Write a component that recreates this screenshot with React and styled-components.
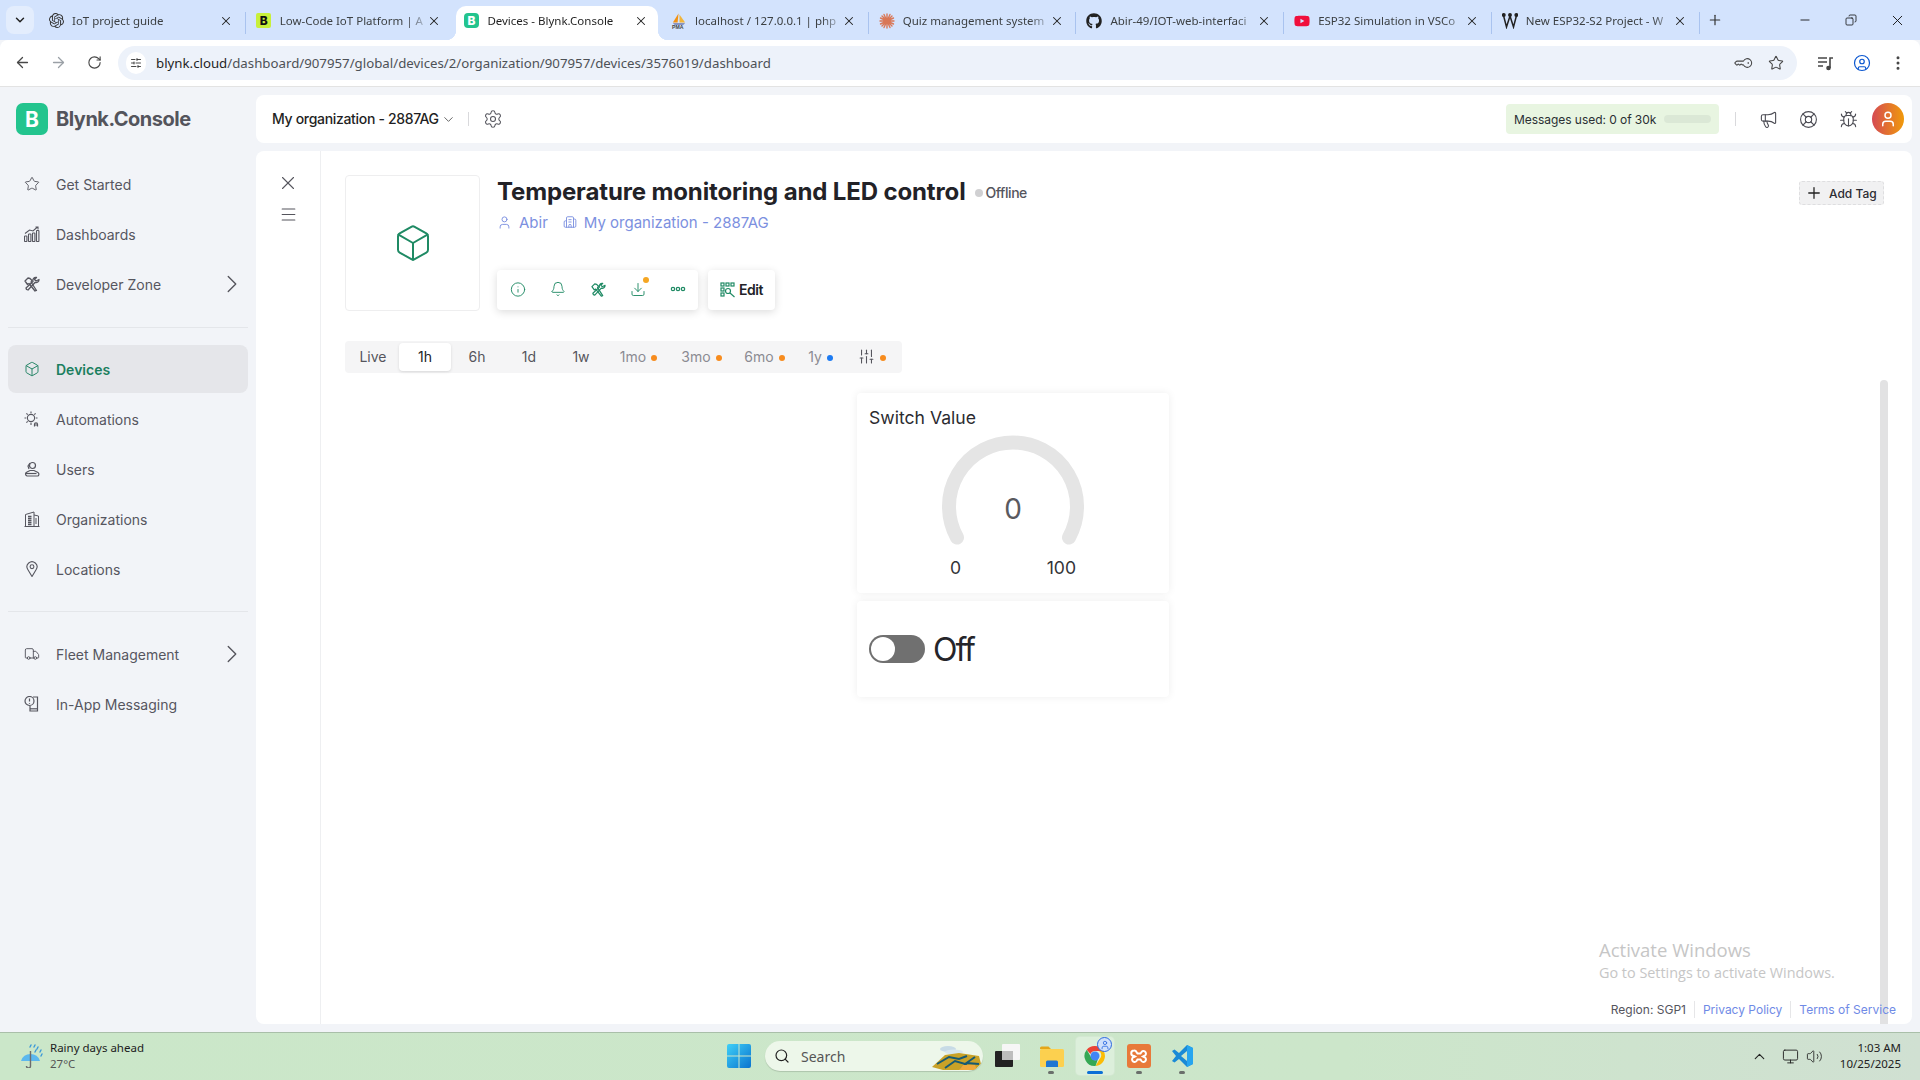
import React from 'react';
import styled, { createGlobalStyle } from 'styled-components';
import {
  X, Menu, Star, Box, ChevronRight, ChevronDown, Settings, Megaphone, LifeBuoy, Bug, Plus, Info, Bell,
  Download, User, Building2, SlidersVertical, ArrowLeft, ArrowRight, RotateCw, KeyRound,
  EllipsisVertical, CircleUser, Search, Minus, Copy, ChevronUp, Volume2, Monitor, Truck,
  SlidersHorizontal,
} from 'lucide-react';
import { FaGithub, FaYoutube } from 'react-icons/fa';
import { SiOpenai } from 'react-icons/si';

const UI = '"Inter", "Liberation Sans", sans-serif';
const SYS = '"Noto Sans", "Open Sans", sans-serif';

const Global = createGlobalStyle`
  html, body { margin: 0; padding: 0; height: 100%; overflow: hidden; background: #f2f4f8; }
  * { box-sizing: border-box; }
  #root { height: 1080px; }
`;

const Screen = styled.div`
  width: 1920px; height: 1080px; display: flex; flex-direction: column; font-family: ${UI}; overflow: hidden;
`;

/* Browser chrome */
const TabStrip = styled.div`
  height: 40px; flex: none; background: #d3e3fd; display: flex; align-items: flex-end; position: relative;
`;
const TabMenu = styled.div`
  width: 28px; height: 28px; margin: 0 4px 6px 6px; border-radius: 8px; background: #e3edfd;
  display: flex; align-items: center; justify-content: center; color: #222; flex: none;
`;
const Tab = styled.div`
  width: ${p => (p.$active ? '201.7px' : '207.7px')}; height: 34px; flex: none; display: flex; align-items: center; position: relative;
  margin: ${p => (p.$active ? '0 3px' : '0')};
  padding-left: ${p => (p.$active ? '7px' : '10px')}; padding-bottom: 5px; font: 11.5px ${SYS}; color: #3c4043;
  background: ${p => (p.$active ? '#fff' : 'transparent')};
  border-radius: 10px 10px 0 0;
  ${p => p.$active && `color: #1f1f1f;
    &::before, &::after { content: ''; position: absolute; bottom: 0; width: 10px; height: 10px; background: radial-gradient(circle at 0 0, transparent 10px, #fff 10.5px); }
    &::before { left: -10px; }
    &::after { right: -10px; transform: scaleX(-1); }`}
  ${p => p.$sep && `&::after { content: ''; position: absolute; right: 0; top: 6px; height: 22px; width: 1px; background: #a9c3ef; }`}
`;
const FavSlot = styled.span`
  width: 16px; height: 16px; flex: none; display: flex; align-items: center; justify-content: center; margin-right: 8px;
`;
const TabTitle = styled.span`
  width: 144px; white-space: nowrap; overflow: hidden; flex: none;
  mask-image: linear-gradient(to right, #000 88%, rgba(0,0,0,.25) 100%);
`;
const TabClose = styled.span`
  width: 20px; text-align: center; color: #222; display: flex; justify-content: center; flex: none;
`;
const NewTab = styled.span`
  margin-left: 7px; margin-bottom: 6px; color: #333; display: flex; height: 28px; align-items: center;
`;
const WindowControls = styled.div`
  margin-left: auto; display: flex; height: 40px; align-items: center; color: #111;
`;
const WinBtn = styled.span`
  width: 46px; display: flex; justify-content: center;
`;
const Toolbar = styled.div`
  height: 47px; flex: none; background: #fff; border-radius: 8px 8px 0 0; border-bottom: 1px solid #e3e3e3;
  display: flex; align-items: center; padding-left: 12px; padding-bottom: 1px;
`;
const NavBtn = styled.span`
  width: 20px; margin-right: 16px; display: flex; justify-content: center; color: ${p => (p.$off ? '#9aa0a6' : '#474747')};
`;
const UrlBar = styled.div`
  width: 1679px; height: 34px; margin-left: -2px; border-radius: 17px; background: #edf2fa; display: flex; align-items: center; padding-left: 8px;
`;
const SiteChip = styled.span`
  width: 20px; height: 22px; border-radius: 11px; background: #fff; display: flex; align-items: center; justify-content: center; color: #333; flex: none;
`;
const UrlText = styled.span`
  margin-left: 10px; font: 13.25px ${SYS}; color: #4d5156; white-space: nowrap;
  b { font-weight: 400; color: #1f1f1f; }
`;
const UrlIcons = styled.span`
  margin-left: auto; display: flex; gap: 16px; padding-right: 13px; color: #474747;
`;
const ToolIcons = styled.div`
  display: flex; align-items: center; margin-left: 20px; gap: 18px; color: #474747;
`;

/* Page */
const PageArea = styled.div`
  flex: 1; display: flex; min-height: 0; background: #f2f4f8;
`;
const Sidebar = styled.aside`
  width: 256px; flex: none; padding: 16px 8px 0;
`;
const Logo = styled.div`
  display: flex; align-items: center; gap: 8px; padding-left: 8px; margin-bottom: 25px; height: 32px;
`;
const LogoMark = styled.span`
  width: 32px; height: 32px; border-radius: 7px; background: #23c48e; color: #fff; font: 700 21px ${UI};
  display: flex; align-items: center; justify-content: center;
`;
const LogoText = styled.span`
  font: 700 20px ${UI}; color: #54545c; letter-spacing: -0.5px;
`;
const NavList = styled.div`
  display: flex; flex-direction: column; gap: 2px;
`;
const NavItem = styled.div`
  height: 48px; display: flex; align-items: center; padding: 0 1px 0 16px; gap: 16px; border-radius: 8px;
  font: ${p => (p.$active ? 600 : 400)} 14px ${UI};
  color: ${p => (p.$active ? '#1b7f5f' : '#56565f')};
  background: ${p => (p.$active ? '#e5e6ea' : 'transparent')};
  svg.lead { flex: none; }
  svg.more { margin-left: auto; color: #55555d; }
`;
const NavDivider = styled.div`
  height: 1px; background: #e4e6ea; margin: ${p => p.$m};
`;
const Content = styled.div`
  flex: 1; min-width: 0; display: flex; flex-direction: column; gap: 8px; padding: 8px 8px 8px 0;
`;
const TopBar = styled.header`
  height: 48px; flex: none; background: #fff; border-radius: 8px; display: flex; align-items: center; padding: 0 8px 0 16px; color: #1f1f24;
`;
const OrgName = styled.span`
  font: 500 14px ${UI}; color: #1f1f24; letter-spacing: -0.32px; padding-bottom: 1px;
`;
const OrgChevron = styled.span`
  display: flex; margin-left: 2px; color: #444;
`;
const VSep = styled.span`
  width: 1px; height: 14px; background: #d9d9dc; margin: ${p => p.$m};
`;
const GearIcon = styled.span`
  display: flex; color: #55555d;
`;
const Usage = styled.div`
  margin-left: auto; width: 213px; height: 30px; border-radius: 4px; background: #e8f5e1; display: flex; align-items: center; padding: 0 8px; gap: 8px;
  font: 400 12px ${UI}; color: #2a2f33; white-space: nowrap; letter-spacing: -0.05px;
`;
const UsageBar = styled.span`
  flex: 1; height: 8px; border-radius: 4px; background: #dbe8d6;
`;
const TopIcon = styled.span`
  width: 40px; display: flex; justify-content: center; color: #4c4c54;
`;
const Avatar = styled.span`
  width: 32px; height: 32px; border-radius: 50%; background: linear-gradient(90deg, #d54a53, #f09a0a); display: flex; align-items: center; justify-content: center; color: #fff; margin-left: 4px;
`;
const MainCard = styled.main`
  flex: 1; min-height: 0; background: #fff; border-radius: 8px; display: flex; position: relative; overflow: hidden;
`;
const Rail = styled.div`
  width: 65px; flex: none; border-right: 1px solid #eeeff1; padding-top: 21px; display: flex; flex-direction: column; align-items: center; gap: 8px; color: #55555d;
`;
const RailMenu = styled.span`
  display: flex; margin: 3px 0 1px;
`;
const Body = styled.div`
  flex: 1; min-width: 0; padding: 24px 16px 5px 24px; display: flex; flex-direction: column;
`;
const DeviceHead = styled.div`
  display: flex; gap: 17px;
`;
const DeviceImage = styled.div`
  width: 135px; height: 136px; flex: none; border: 1px solid #eeeeef; border-radius: 4px; display: flex; align-items: center; justify-content: center; color: #1f8a64;
`;
const DeviceInfo = styled.div`
  flex: 1; min-width: 0; display: flex; flex-direction: column;
`;
const TitleRow = styled.div`
  display: flex; align-items: center; height: 32px;
`;
const Title = styled.h1`
  margin: 0; font: 700 24px ${UI}; color: #222227; letter-spacing: -0.13px; white-space: nowrap;
`;
const StatusDot = styled.span`
  width: 8px; height: 8px; border-radius: 50%; background: #d0d0d2; margin: 3px 3px 0 9px;
`;
const StatusText = styled.span`
  font: 500 14px ${UI}; color: #55555d; letter-spacing: -0.45px; margin-top: 3px;
`;
const MetaRow = styled.div`
  display: flex; align-items: center; height: 20px; margin-top: 5px; color: #7c90e0; font: 400 15px ${UI}; white-space: nowrap;
`;
const MetaLink = styled.span`
  display: flex; align-items: center; gap: 7px; margin-right: 15px;
`;
const ActionRow = styled.div`
  display: flex; gap: 10px; margin-top: 38px;
`;
const ActionCard = styled.div`
  height: 40px; background: #fff; border-radius: 4px; box-shadow: 0 2px 8px rgba(0,0,0,.14); display: flex; align-items: center; color: #1f8a64;
  padding: ${p => p.$pad};
  gap: ${p => p.$gap};
`;
const ActionIcon = styled.span`
  width: 16px; display: flex; justify-content: center; position: relative; margin-top: -2px;
  ${p => p.$badge && `&::after { content: ''; position: absolute; right: -3px; top: -4px; width: 6px; height: 6px; border-radius: 50%; background: #f5a623; }`}
`;
const EditLabel = styled.span`
  font: 600 14px ${UI}; color: #222227; letter-spacing: -0.45px; margin-top: -1px;
`;
const AddTag = styled.button`
  align-self: flex-start; margin: 6px 12px 0 0; width: 85px; height: 24px; padding: 0 0 0 5px; background: #f1f1f2; border: 1px dashed #dedee0; border-radius: 3px;
  display: flex; align-items: center; gap: 6px; font: 500 12px ${UI}; color: #2c2c33; white-space: nowrap;
`;
const RangeTabs = styled.div`
  width: 557px; height: 32px; margin-top: 30px; padding: 2px; border-radius: 4px; background: #f5f5f6; display: flex; align-items: stretch;
`;
const RangeTab = styled.span`
  display: flex; align-items: center; justify-content: center; gap: 5px; flex: none; padding-bottom: 1px;
  width: ${p => p.$w}px; font: 400 14px ${UI};
  color: ${p => (p.$muted ? '#8b8b92' : '#55555d')};
  ${p => p.$active && `background: #fff; color: #222227; border-radius: 4px; box-shadow: 0 1px 3px rgba(0,0,0,.12);`}
`;
const Dot = styled.span`
  width: 6px; height: 6px; border-radius: 50%; background: ${p => (p.$blue ? '#1d7bf2' : '#f78c1e')}; margin-top: 3px;
`;
const Widgets = styled.div`
  width: 312px; margin: 20px 0 0 512px; display: flex; flex-direction: column; gap: 8px;
`;
const Widget = styled.section`
  height: ${p => p.$h}px; background: #fff; border-radius: 4px; box-shadow: 0 0 8px rgba(0,0,0,.07); padding: 12px;
  ${p => p.$row && `display: flex; align-items: center; gap: 8px; padding-bottom: 14px;`}
`;
const WidgetTitle = styled.div`
  font: 400 17.6px/26px ${UI}; color: #2b2b30;
`;
const GaugeWrap = styled.div`
  position: relative; width: 142px; height: 123px; margin: 2px auto 0;
`;
const GaugeValue = styled.span`
  position: absolute; left: 0; right: 0; top: 56px; text-align: center; font: 400 28px/40px ${UI}; color: #5a5a5f;
`;
const GaugeLabels = styled.div`
  width: 126px; margin: 0 auto; display: flex; justify-content: space-between; font: 400 17.6px/24px ${UI}; color: #333338;
`;
const Toggle = styled.span`
  width: 56px; height: 28px; border-radius: 14px; background: #707070; padding: 2px; display: flex; flex: none; margin-top: 2px;
`;
const Knob = styled.span`
  width: 24px; height: 24px; border-radius: 50%; background: #fff;
`;
const ToggleLabel = styled.span`
  font: 400 32px/40px ${UI}; color: #25252a; letter-spacing: -2px; margin-top: 3px;
`;
const Scroll = styled.div`
  position: absolute; right: 24px; top: 229px; bottom: 0; width: 8px; background: #e2e2e3; border-radius: 4px 4px 0 0;
`;
const Watermark = styled.div`
  position: absolute; left: 1343px; top: 787px; font-family: "Open Sans", sans-serif; color: #c6c6c6; white-space: nowrap; z-index: 2;
`;
const WmTitle = styled.div`
  font-size: 18.5px; line-height: 24px;
`;
const WmSub = styled.div`
  font-size: 14.4px; line-height: 21px;
`;
const Footer = styled.footer`
  margin-top: auto; height: 20px; display: flex; align-items: center; justify-content: flex-end; font: 400 12px ${UI}; color: #55555d; position: relative; z-index: 3;
`;
const FootLink = styled.span`
  color: #6f8ae6; padding-left: 8px; margin-left: 8px; border-left: 1px solid #e6e6e8; line-height: 17px;
`;

/* Taskbar */
const Taskbar = styled.footer`
  height: 48px; flex: none; border-top: 1px solid #a9bfa9; background: linear-gradient(90deg, #cbe7c9 0%, #cce6ca 70%, #d0e0d2 100%);
  display: flex; align-items: center; padding: 0 0 1px 20px; color: #1c1c1c; font: 12px ${SYS};
`;
const Weather = styled.div`
  width: 707px; flex: none; display: flex; align-items: center; gap: 6px;
`;
const WeatherText = styled.div`
  line-height: 16px; font-size: 11.5px; margin-top: -1px;
  span { display: block; color: #555; }
`;
const CenterApps = styled.div`
  display: flex; align-items: center; height: 46px;
`;
const SearchPill = styled.div`
  width: 218px; height: 30px; border-radius: 15px; background: #edf7ea; box-shadow: 0 1px 1px rgba(0,0,0,.15); margin-left: 14px; display: flex; align-items: center; padding-left: 9px; gap: 11px; font-size: 14px; color: #555; position: relative; overflow: hidden;
`;
const SearchArt = styled.span`
  position: absolute; right: 2px; top: 2px; display: flex;
`;
const AppSlot = styled.span`
  width: 38px; height: 38px; margin-left: ${p => p.$ml || 0}px; border-radius: 4px; display: flex; align-items: center; justify-content: center; position: relative; flex: none;
  ${p => p.$on && `background: #dcefdb; box-shadow: 0 0 0 1px #d3e8d2;`}
  ${p => p.$mark && `&::after { content: ''; position: absolute; bottom: 1px; left: 50%; transform: translateX(-50%); height: 3px; border-radius: 2px; width: ${p.$on ? 16 : 6}px; background: ${p.$on ? '#0b6fd6' : '#6a6f6b'}; }`}
`;
const Badge = styled.span`
  position: absolute; right: 2px; top: 0; width: 15px; height: 15px; border-radius: 50%; background: #cfe0fb; border: 1px solid #2d6ae0; display: flex; align-items: center; justify-content: center; color: #2d6ae0;
`;
const Tray = styled.div`
  margin-left: auto; display: flex; align-items: center; color: #222;
`;
const Clock = styled.div`
  width: 72px; margin: 0 19px 0 6px; text-align: right; line-height: 16px; font-size: 11.5px; flex: none; white-space: nowrap;
`;

const DashIcon = () => (
  <svg className="lead" width="16" height="16" viewBox="0 0 16 16" fill="none" stroke="currentColor" strokeWidth="1.1">
    <rect x=".5" y="10" width="2.4" height="5.5" rx=".6"/><rect x="4.5" y="8" width="2.4" height="7.5" rx=".6"/><rect x="8.5" y="7" width="2.4" height="8.5" rx=".6"/><rect x="12.5" y="4.5" width="2.4" height="11" rx=".6"/>
    <path d="M1 7.500 5.500 4 9 5l4.500-4M11.500 1H14v2.500"/>
  </svg>
);
const ToolsIcon = ({ size = 16 }) => (
  <svg className="lead" width={size} height={size} viewBox="0 0 16 16" fill="none" stroke="currentColor" strokeWidth="1.3" strokeLinejoin="round">
    <path d="M1 5 4 2l2 .5 2 2-1 1.500L12.500 14.500l-1.500 .500L5 7.500 3.500 8.500z"/><path d="M15 3.500a3 3 0 0 1-4 3L4 14l-1.500-.5-.5-1.500 7-6.500a3 3 0 0 1 3.500-4L10.500 3.500l1.500 1.500z"/>
  </svg>
);
const AutoIcon = () => (
  <svg className="lead" width="16" height="16" viewBox="0 0 16 16" fill="none" stroke="currentColor" strokeWidth="1.100">
    <circle cx="7" cy="7" r="3.600"/><path d="M7 .5v1.800M.5 7h1.800M11.700 7h1.800M2.400 2.400l1.300 1.300M11.600 2.400l-1.300 1.300M2.400 11.600l1.300-1.300M7 11.700v2.300"/><path d="M10.500 15.500v-2.200a1.500 1.500 0 0 1 3 0v2.200M10.500 14h3" strokeWidth="1.200"/>
  </svg>
);
const UsersIcon = () => (
  <svg className="lead" width="16" height="16" viewBox="0 0 16 16" fill="none" stroke="currentColor" strokeWidth="1.200">
    <circle cx="8.500" cy="4.500" r="3"/><path d="M3 15c-2-1-2-3 0-4l3-1.500h4l4 2c1.500 1 1 3.500-.5 3.500z"/><path d="M6 2 4 5l1 3"/><path d="M1.500 12.500h11"/>
  </svg>
);
const OrgIcon = () => (
  <svg className="lead" width="16" height="16" viewBox="0 0 16 16" fill="none" stroke="currentColor" strokeWidth="1">
    <path d="M.5 15.500h15M1.500 15V3.500L10 1v14M10 4l4.500 1v10"/><path d="M4 5.500h3.500M4 7.500h3.500M4 9.500h3.500M4 11.500h3.500M4 13.500h3.500" strokeWidth="1.300"/><path d="M12 7v6" />
  </svg>
);
const PinIcon = () => (
  <svg className="lead" width="16" height="16" viewBox="0 0 16 16" fill="none" stroke="currentColor" strokeWidth="1.100">
    <path d="M8 15.500 3.800 8.500a5 5 0 1 1 8.400 0z" /><circle cx="8" cy="5.700" r="1.900"/>
  </svg>
);
const MsgIcon = () => (
  <svg className="lead" width="16" height="16" viewBox="0 0 16 16" fill="none" stroke="currentColor" strokeWidth="1.200">
    <circle cx="5.500" cy="5" r="4.500"/><path d="M5.500 2.500v3M5.500 7v.8"/><path d="M9 1h4.500v14H6v-5"/><path d="M6 12.800h7.500"/>
  </svg>
);
const EditIcon = () => (
  <svg width="16" height="16" viewBox="0 0 16 16" fill="none" stroke="currentColor" strokeWidth="1.200">
    <rect x="1" y="1" width="3" height="3"/><rect x="6" y="1" width="3" height="3"/><rect x="11" y="1" width="3" height="3"/><rect x="1" y="6" width="3" height="3"/><rect x="1" y="11" width="3" height="3"/>
    <circle cx="8" cy="9" r="2.500"/><path d="m10 11 4.500 4"/>
  </svg>
);
const DotsIcon = () => (
  <svg width="16" height="16" viewBox="0 0 16 16" fill="none" stroke="currentColor" strokeWidth="1.200">
    <circle cx="3" cy="8" r="1.700"/><circle cx="8" cy="8" r="1.700"/><circle cx="13" cy="8" r="1.700"/>
  </svg>
);
const PmaIcon = () => (
  <svg width="17" height="16" viewBox="0 0 17 16"><path d="M8 0 2 9.500h5z" fill="#f29111"/><path d="M9 1l6 8.500H9z" fill="#f0b53c"/><path d="M2 10.500h13L13 12H4z" fill="#6c78af"/><text x="1" y="16" fontSize="5.500" fontWeight="700" fill="#444" fontFamily="Liberation Sans">PMA</text></svg>
);
const BurstIcon = () => (
  <svg width="16" height="16" viewBox="0 0 16 16" stroke="#d97757" strokeWidth="1.400" strokeLinecap="round">
    <path d="M8 1v14M1 8h14M3 3l10 10M13 3 3 13M5 1.500l6 13M11 1.500l-6 13M1.500 5l13 6M14.500 5l-13 6"/>
  </svg>
);
const WokwiIcon = () => (
  <svg width="16" height="16" viewBox="0 0 16 16" fill="none" stroke="#222" strokeWidth="1.500">
    <path d="M1.500 2.500 4.500 14 8 3l3.500 11 3-11.500"/><circle cx="1.800" cy="2" r="1.200" fill="#222"/><circle cx="8" cy="2" r="1.200" fill="#222"/><circle cx="14.300" cy="2" r="1.200" fill="#222"/>
  </svg>
);
const BlockFav = styled.span`
  width: 15px; height: 15px; background: ${p => p.$bg}; color: ${p => p.$fg}; border-radius: ${p => p.$r}; font: 800 12px/15px ${UI}; text-align: center; display: block;
`;
const ChromeLogo = () => (
  <svg width="24" height="24" viewBox="0 0 48 48">
    <path d="M24 4a20 20 0 0 1 17.300 10H24a10 10 0 0 0-9.200 6L7.500 11.500A20 20 0 0 1 24 4z" fill="#ea4335"/>
    <path d="M41.300 14A20 20 0 0 1 25 44l8.500-14.500A10 10 0 0 0 32 14z" fill="#fbbc05"/>
    <path d="M7.500 11.500 16.500 27a10 10 0 0 0 13 4.500L25 44A20 20 0 0 1 7.500 11.500z" fill="#34a853"/>
    <circle cx="24" cy="24" r="9" fill="#4285f4"/>
  </svg>
);
const Folder = () => (
  <svg width="25" height="24" viewBox="0 0 25 24"><path d="M1 4a1.500 1.500 0 0 1 1.500-1.500h7L12 5h-11z" fill="#e4a61a"/><rect x="1" y="5" width="24" height="18" rx="1.500" fill="#fcd04f"/><path d="M7 23v-5a1.500 1.500 0 0 1 1.500-1.500h9A1.500 1.500 0 0 1 19 18v5z" fill="#1f76d2"/></svg>
);
const Xampp = () => (
  <svg width="24" height="24" viewBox="0 0 24 24"><rect width="24" height="24" rx="3" fill="#e8793a"/><path d="M7 6.500a2.500 2.500 0 0 1 2.500 1.500l1 1.500h3l1-1.500a2.500 2.500 0 1 1 2.500 4l-1 .5 1 .5a2.500 2.500 0 1 1-2.500 4l-1-1.500h-3l-1 1.500a2.500 2.500 0 1 1-2.500-4l1-.5-1-.5a2.500 2.500 0 0 1 0-5.500z" fill="none" stroke="#fff" strokeWidth="2"/></svg>
);
const VsCode = () => (
  <svg width="24" height="24" viewBox="0 0 24 24"><path d="M17 1 23 4v16l-6 3-8-8-4.500 3.500L2 17l4-5-4-5 2.500-1.500L9 9z" fill="#1a8ad6"/><path d="M17 1l6 3v16l-6 3z" fill="#27a5ef"/><path d="M17 7 11 12l6 5z" fill="#cbe6ca"/></svg>
);
const WinLogo = () => (
  <svg width="24" height="24" viewBox="0 0 24 24"><defs><linearGradient id="w" x1="0" y1="0" x2="1" y2="1"><stop offset="0" stopColor="#3fd0f7"/><stop offset="1" stopColor="#0a73cf"/></linearGradient></defs><path d="M0 2a2 2 0 0 1 2-2h9.500v11.500H0zM12.500 0H22a2 2 0 0 1 2 2v9.500H12.500zM0 12.500h11.500V24H2a2 2 0 0 1-2-2zM12.500 12.500H24V22a2 2 0 0 1-2 2h-9.500z" fill="url(#w)"/></svg>
);
const TaskView = () => (
  <svg width="26" height="24" viewBox="0 0 26 24"><rect x="7" y="0" width="18" height="16" rx="1" fill="#f6f6f6"/><rect x="0" y="7" width="18" height="16" rx="1" fill="#222"/><rect x="7" y="7" width="11" height="9" fill="#bdbdbd"/></svg>
);
const SearchScene = () => (
  <svg width="50" height="27" viewBox="0 0 50 27">
    <ellipse cx="17" cy="6" rx="8" ry="3" fill="#c7dbe6"/><ellipse cx="23" cy="9" rx="9" ry="2.500" fill="#d8e7ee"/>
    <path d="M1 24 14 12l14-2 20 3 2 8-6 6H12z" fill="#c9a227"/>
    <path d="M6 21 18 14l10 2 8-3M14 25l10-7 10 3 10-7M30 26l6-6 12 1" stroke="#175a73" strokeWidth="2" fill="none"/>
    <path d="M28 27l4-5h12l2 5z" fill="#f0a93c"/>
  </svg>
);
const WeatherIcon = () => (
  <svg width="24" height="24" viewBox="0 0 24 24">
    <path d="M1 17a10 10 0 0 1 19 0z" fill="#5cb8ee"/><path d="M10.500 7v15a2 2 0 0 1-4 0" fill="none" stroke="#6d6d6d" strokeWidth="1.400"/>
    <path d="M11 1l-1 2M15 1l-1 2M18 3l-1 2M21 6l-1 2M22 10l-1 2M16 6l-1 2" stroke="#3d9ad8" strokeWidth="1.400" strokeLinecap="round"/>
  </svg>
);
const MediaIcon = () => (
  <svg width="18" height="16" viewBox="0 0 18 16" fill="none" stroke="#474747" strokeWidth="1.600"><path d="M1 3h9M1 7h9M1 11h5"/><path d="M13 13V3h3"/><circle cx="11.500" cy="13" r="1.500" fill="#474747"/></svg>
);
const GaugeArc = () => (
  <svg width="142" height="120" viewBox="0 0 142 120" fill="none"><path d="M15 104.500A64 64 0 1 1 127 104.500" stroke="#e5e5e5" strokeWidth="14" strokeLinecap="round"/></svg>
);

const tabs = [
  { t: 'IoT project guide', i: <SiOpenai size={15} color="#333" />, sep: true },
  { t: 'Low-Code IoT Platform | A', i: <BlockFav $bg="#c8f03a" $fg="#111" $r="2px">B</BlockFav> },
  { t: 'Devices - Blynk.Console', i: <BlockFav $bg="#23c48e" $fg="#fff" $r="4px">B</BlockFav>, active: true },
  { t: 'localhost / 127.0.0.1 | php', i: <PmaIcon />, sep: true },
  { t: 'Quiz management system', i: <BurstIcon />, sep: true },
  { t: 'Abir-49/IOT-web-interfaci', i: <FaGithub size={16} color="#222" />, sep: true },
  { t: 'ESP32 Simulation in VSCo', i: <FaYoutube size={16} color="#f00f3c" />, sep: true },
  { t: 'New ESP32-S2 Project - W', i: <WokwiIcon />, sep: true },
];

const ranges = [
  { l: 'Live', w: 52 }, { l: '1h', w: 52, active: true }, { l: '6h', w: 52 }, { l: '1d', w: 52 }, { l: '1w', w: 52 },
  { l: '1mo', w: 63, muted: true, dot: 'o' }, { l: '3mo', w: 63, muted: true, dot: 'o' }, { l: '6mo', w: 63, muted: true, dot: 'o' },
  { l: '1y', w: 49, muted: true, dot: 'b' },
];

const Icon = { size: 16, strokeWidth: 1.4, className: 'lead' };

export default function App() {
  return (
    <Screen>
      <Global />
      <TabStrip>
        <TabMenu><ChevronDown size={14} strokeWidth={2.5} /></TabMenu>
        {tabs.map(t => (
          <Tab key={t.t} $active={t.active} $sep={t.sep}>
            <FavSlot>{t.i}</FavSlot>
            <TabTitle>{t.t}</TabTitle>
            <TabClose><X size={14} strokeWidth={1.8} /></TabClose>
          </Tab>
        ))}
        <NewTab><Plus size={16} strokeWidth={1.8} /></NewTab>
        <WindowControls>
          <WinBtn><Minus size={14} strokeWidth={1.5} /></WinBtn>
          <WinBtn><Copy size={12} strokeWidth={1.6} style={{ transform: 'scaleX(-1)' }} /></WinBtn>
          <WinBtn><X size={17} strokeWidth={1.3} /></WinBtn>
        </WindowControls>
      </TabStrip>
      <Toolbar>
        <NavBtn><ArrowLeft size={17} strokeWidth={1.8} /></NavBtn>
        <NavBtn $off><ArrowRight size={17} strokeWidth={1.8} /></NavBtn>
        <NavBtn><RotateCw size={15} strokeWidth={1.8} /></NavBtn>
        <UrlBar>
          <SiteChip><SlidersHorizontal size={12} strokeWidth={1.8} /></SiteChip>
          <UrlText><b>blynk.cloud</b>/dashboard/907957/global/devices/2/organization/907957/devices/3576019/dashboard</UrlText>
          <UrlIcons>
            <KeyRound size={16} strokeWidth={1.6} style={{ transform: 'rotate(45deg)' }} />
            <Star size={16} strokeWidth={1.6} />
          </UrlIcons>
        </UrlBar>
        <ToolIcons>
          <MediaIcon />
          <CircleUser size={18} strokeWidth={1.6} color="#0b57d0" />
          <EllipsisVertical size={18} strokeWidth={2} />
        </ToolIcons>
      </Toolbar>

      <PageArea>
        <Sidebar>
          <Logo>
            <LogoMark>B</LogoMark>
            <LogoText>Blynk.Console</LogoText>
          </Logo>
          <NavList>
            <NavItem><Star {...Icon} />Get Started</NavItem>
            <NavItem><DashIcon />Dashboards</NavItem>
            <NavItem><ToolsIcon />Developer Zone<ChevronRight className="more" size={30} strokeWidth={1.1} /></NavItem>
          </NavList>
          <NavDivider $m="19px 0 17px" />
          <NavList>
            <NavItem $active><Box {...Icon} />Devices</NavItem>
            <NavItem><AutoIcon />Automations</NavItem>
            <NavItem><UsersIcon />Users</NavItem>
            <NavItem><OrgIcon />Organizations</NavItem>
            <NavItem><PinIcon />Locations</NavItem>
          </NavList>
          <NavDivider $m="18px 0" />
          <NavList>
            <NavItem><Truck {...Icon} />Fleet Management<ChevronRight className="more" size={30} strokeWidth={1.1} /></NavItem>
            <NavItem><MsgIcon />In-App Messaging</NavItem>
          </NavList>
        </Sidebar>

        <Content>
          <TopBar>
            <OrgName>My organization - 2887AG</OrgName>
            <OrgChevron><ChevronDown size={15} strokeWidth={1.3} /></OrgChevron>
            <VSep $m="0 14px 0 12px" />
            <GearIcon><Settings size={20} strokeWidth={1.3} /></GearIcon>
            <Usage>Messages used: 0 of 30k<UsageBar /></Usage>
            <VSep $m="0 12px 0 16px" />
            <TopIcon><Megaphone size={19} strokeWidth={1.4} /></TopIcon>
            <TopIcon><LifeBuoy size={19} strokeWidth={1.4} /></TopIcon>
            <TopIcon><Bug size={19} strokeWidth={1.4} /></TopIcon>
            <Avatar><User size={18} strokeWidth={2} /></Avatar>
          </TopBar>

          <MainCard>
            <Rail>
              <X size={22} strokeWidth={1.2} />
              <RailMenu><Menu size={19} strokeWidth={1.4} /></RailMenu>
            </Rail>
            <Body>
              <DeviceHead>
                <DeviceImage><Box size={40} strokeWidth={1.2} /></DeviceImage>
                <DeviceInfo>
                  <TitleRow>
                    <Title>Temperature monitoring and LED control</Title>
                    <StatusDot />
                    <StatusText>Offline</StatusText>
                  </TitleRow>
                  <MetaRow>
                    <MetaLink><User size={15} strokeWidth={1.5} />Abir</MetaLink>
                    <MetaLink><Building2 size={14} strokeWidth={1.6} />My organization - 2887AG</MetaLink>
                  </MetaRow>
                  <ActionRow>
                    <ActionCard $pad="0 12px 0 13px" $gap="24px">
                      <ActionIcon><Info size={17} strokeWidth={1.4} /></ActionIcon>
                      <ActionIcon><Bell size={16} strokeWidth={1.4} /></ActionIcon>
                      <ActionIcon><ToolsIcon size={15} /></ActionIcon>
                      <ActionIcon $badge><Download size={17} strokeWidth={1.4} /></ActionIcon>
                      <ActionIcon><DotsIcon /></ActionIcon>
                    </ActionCard>
                    <ActionCard $pad="0 12px" $gap="3px">
                      <EditIcon />
                      <EditLabel>Edit</EditLabel>
                    </ActionCard>
                  </ActionRow>
                </DeviceInfo>
                <AddTag><Plus size={18} strokeWidth={1.7} color="#222" />Add Tag</AddTag>
              </DeviceHead>

              <RangeTabs>
                {ranges.map(r => (
                  <RangeTab key={r.l} $w={r.w} $active={r.active} $muted={r.muted}>
                    {r.l}{r.dot && <Dot $blue={r.dot === 'b'} />}
                  </RangeTab>
                ))}
                <RangeTab $w={54} $muted>
                  <SlidersVertical size={17} strokeWidth={1.5} color="#55555d" /><Dot />
                </RangeTab>
              </RangeTabs>

              <Widgets>
                <Widget $h={200}>
                  <WidgetTitle>Switch Value</WidgetTitle>
                  <GaugeWrap>
                    <GaugeArc />
                    <GaugeValue>0</GaugeValue>
                  </GaugeWrap>
                  <GaugeLabels><span>0</span><span>100</span></GaugeLabels>
                </Widget>
                <Widget $h={96} $row>
                  <Toggle><Knob /></Toggle>
                  <ToggleLabel>Off</ToggleLabel>
                </Widget>
              </Widgets>

              <Footer>
                Region: SGP1
                <FootLink>Privacy Policy</FootLink>
                <FootLink>Terms of Service</FootLink>
              </Footer>
            </Body>
            <Scroll />
            <Watermark>
              <WmTitle>Activate Windows</WmTitle>
              <WmSub>Go to Settings to activate Windows.</WmSub>
            </Watermark>
          </MainCard>
        </Content>
      </PageArea>

      <Taskbar>
        <Weather>
          <WeatherIcon />
          <WeatherText>Rainy days ahead<span>27°C</span></WeatherText>
        </Weather>
        <CenterApps>
          <WinLogo />
          <SearchPill>
            <Search size={16} strokeWidth={1.8} color="#222" />
            Search
            <SearchArt><SearchScene /></SearchArt>
          </SearchPill>
          <AppSlot $ml={6}><TaskView /></AppSlot>
          <AppSlot $ml={5} $mark><Folder /></AppSlot>
          <AppSlot $on $mark $ml={6}>
            <ChromeLogo />
            <Badge><User size={10} strokeWidth={2} /></Badge>
          </AppSlot>
          <AppSlot $ml={6} $mark><Xampp /></AppSlot>
          <AppSlot $ml={5} $mark><VsCode /></AppSlot>
        </CenterApps>
        <Tray>
          <ChevronUp size={17} strokeWidth={1.6} style={{ marginRight: 14 }} />
          <Monitor size={17} strokeWidth={1.3} style={{ marginRight: 7 }} />
          <Volume2 size={17} strokeWidth={1.2} />
          <Clock>1:03 AM<br />10/25/2025</Clock>
        </Tray>
      </Taskbar>
    </Screen>
  );
}
